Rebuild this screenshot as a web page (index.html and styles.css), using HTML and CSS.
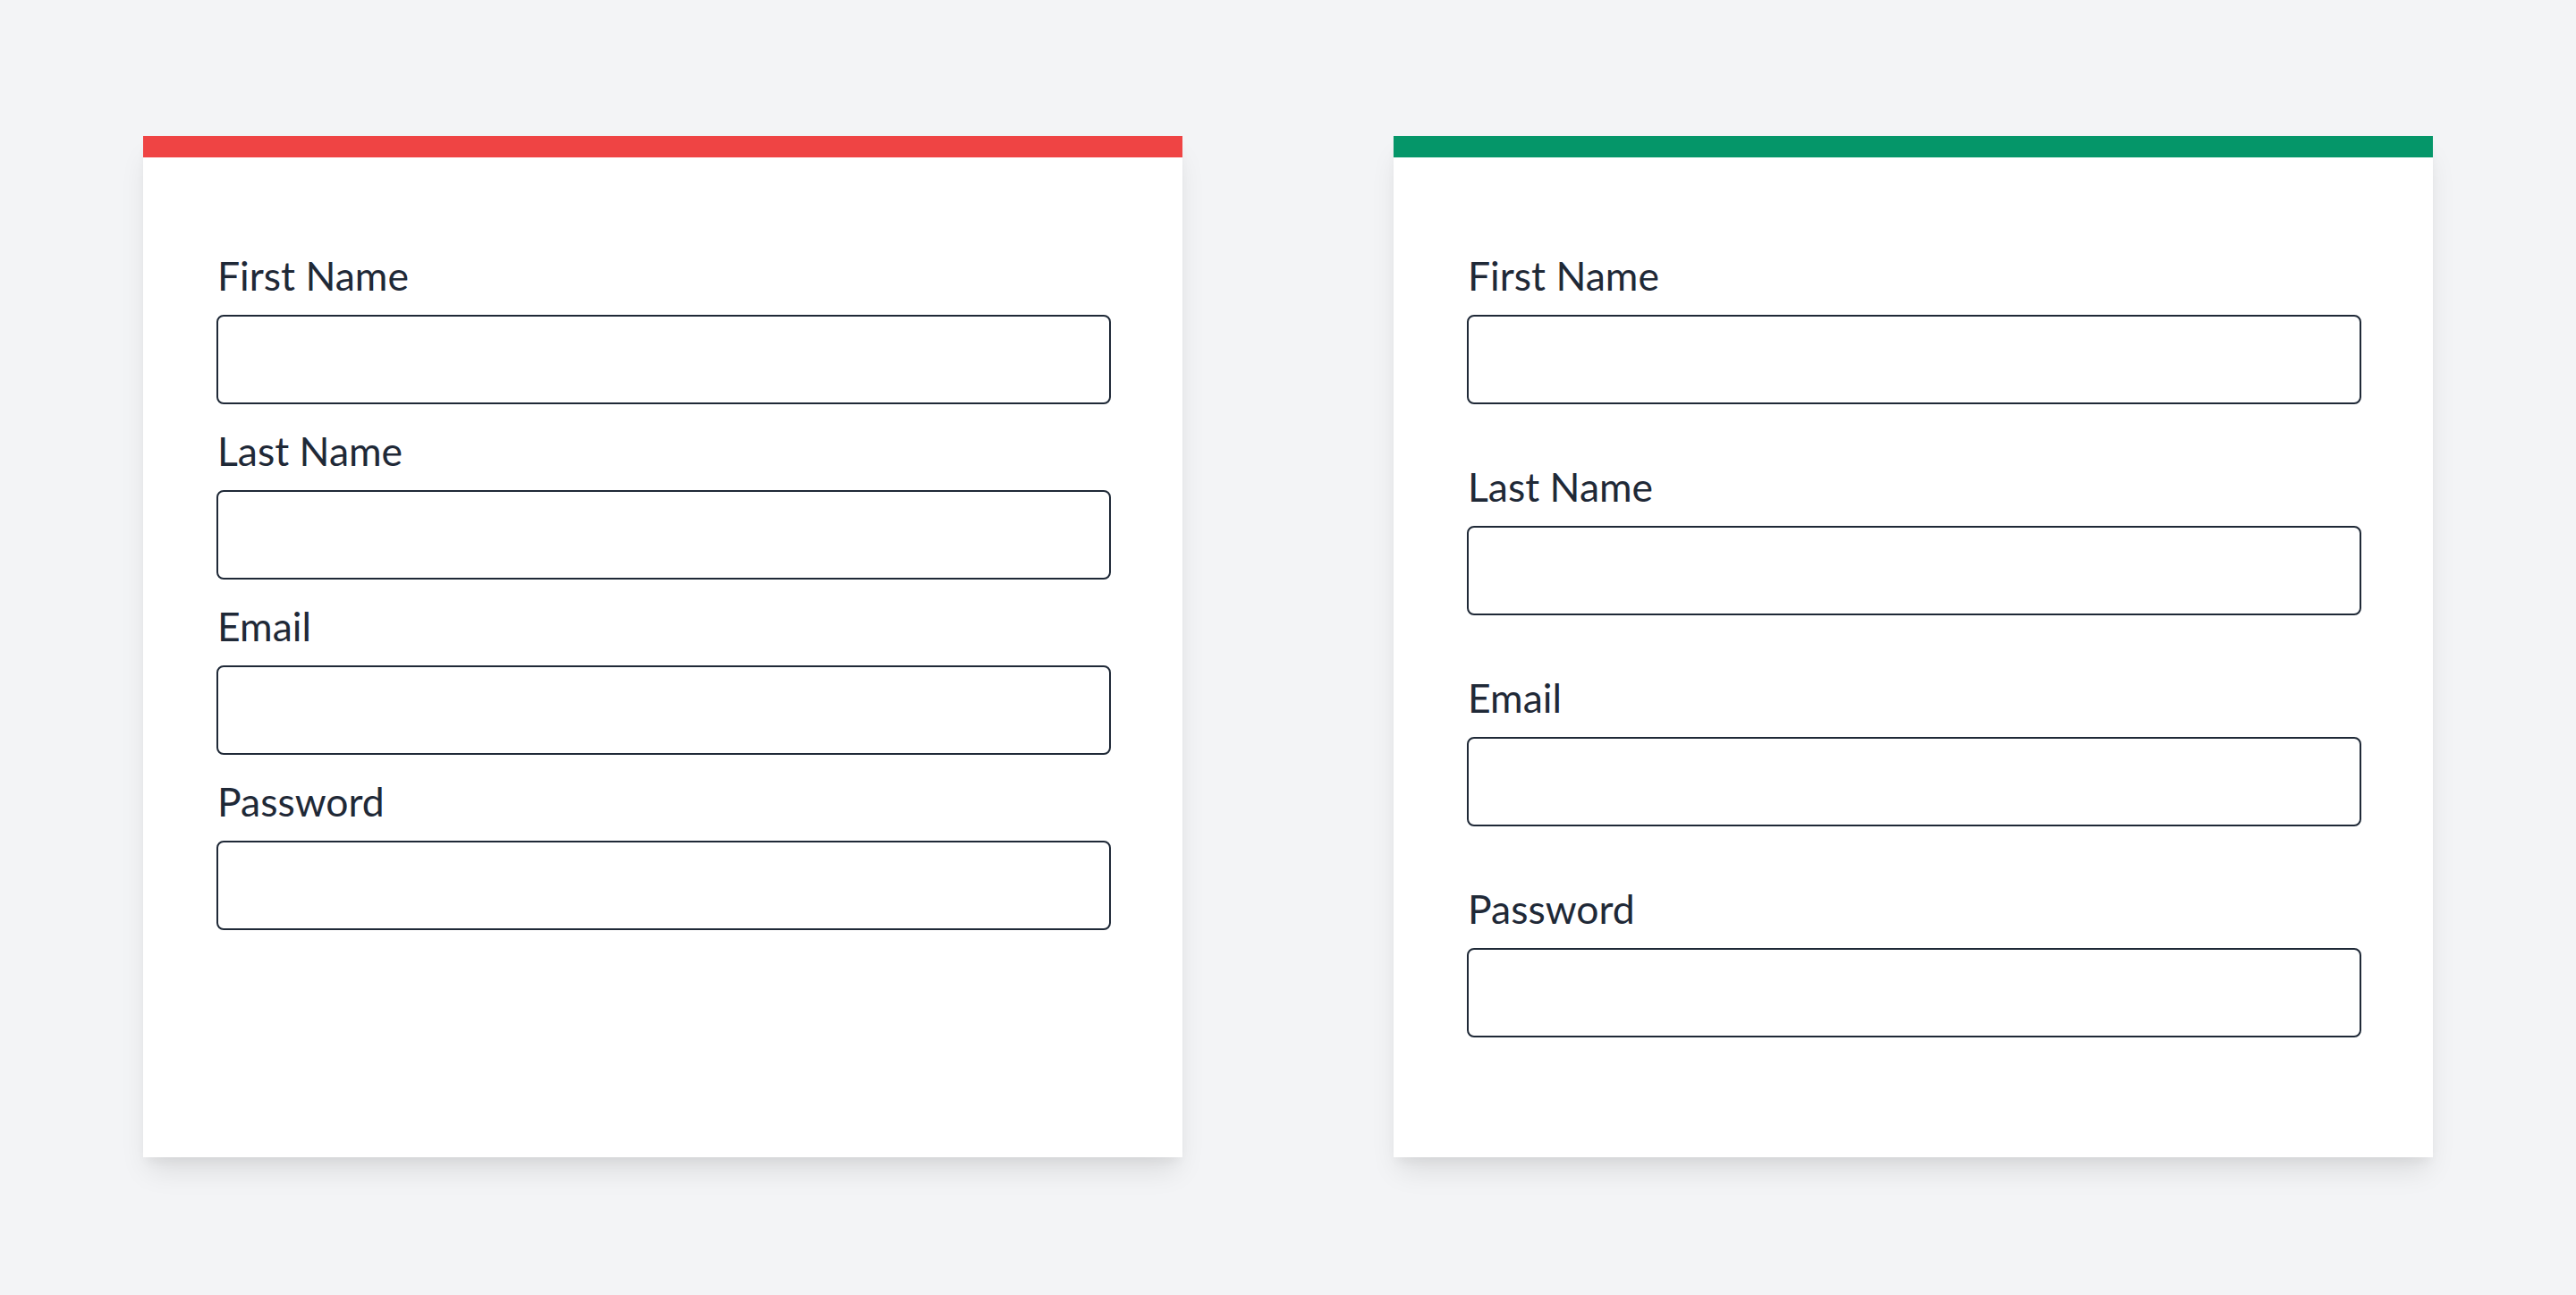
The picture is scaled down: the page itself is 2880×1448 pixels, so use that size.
FILE: index.html
```html
<!DOCTYPE html>
<html lang="en">
<head>
<meta charset="utf-8">
<title>Forms</title>
<link rel="stylesheet" href="styles.css">
</head>
<body>
<main class="page">
  <section class="card card--red">
    <div class="card__bar"></div>
    <form class="card__body form form--tight">
      <div class="field">
        <label class="field__label" for="a1">First Name</label>
        <input class="field__input" id="a1" type="text">
      </div>
      <div class="field">
        <label class="field__label" for="a2">Last Name</label>
        <input class="field__input" id="a2" type="text">
      </div>
      <div class="field">
        <label class="field__label" for="a3">Email</label>
        <input class="field__input" id="a3" type="email">
      </div>
      <div class="field">
        <label class="field__label" for="a4">Password</label>
        <input class="field__input" id="a4" type="password">
      </div>
    </form>
  </section>
  <section class="card card--green">
    <div class="card__bar"></div>
    <form class="card__body form form--loose">
      <div class="field">
        <label class="field__label" for="b1">First Name</label>
        <input class="field__input" id="b1" type="text">
      </div>
      <div class="field">
        <label class="field__label" for="b2">Last Name</label>
        <input class="field__input" id="b2" type="text">
      </div>
      <div class="field">
        <label class="field__label" for="b3">Email</label>
        <input class="field__input" id="b3" type="email">
      </div>
      <div class="field">
        <label class="field__label" for="b4">Password</label>
        <input class="field__input" id="b4" type="password">
      </div>
    </form>
  </section>
</main>
</body>
</html>
```
FILE: styles.css
```css
* { box-sizing: border-box; }

html, body {
  margin: 0;
  padding: 0;
  background: #f3f4f6;
}

body {
  font-family: "Lato", "Liberation Sans", sans-serif;
  color: #1f2937;
}

.page {
  display: grid;
  grid-template-columns: 1162px 1162px;
  column-gap: 236px;
  padding: 152px 160px;
  align-items: stretch;
}

.card {
  background: #ffffff;
  display: flex;
  flex-direction: column;
  box-shadow: 0 20px 30px -6px rgba(0, 0, 0, 0.10), 0 8px 12px -4px rgba(0, 0, 0, 0.05);
}

.card__bar {
  height: 24px;
  flex: 0 0 24px;
}

.card--red .card__bar { background: #ef4444; }
.card--green .card__bar { background: #059669; }

.card__body {
  padding: 96px 80px 134px 82px;
  margin: 0;
}

.form {
  display: flex;
  flex-direction: column;
}

.form--tight { gap: 16px; }
.form--loose { gap: 56px; }

.field {
  display: flex;
  flex-direction: column;
}

.field__label {
  font-size: 44.5px;
  line-height: 72px;
  margin-bottom: 8px;
  padding-left: 1px;
}

.field__input {
  display: block;
  width: 100%;
  height: 100px;
  margin: 0;
  border: 2px solid #1f2937;
  border-radius: 8px;
  background: #ffffff;
  font: inherit;
  font-size: 40px;
  padding: 0 20px;
  outline: none;
}
```
